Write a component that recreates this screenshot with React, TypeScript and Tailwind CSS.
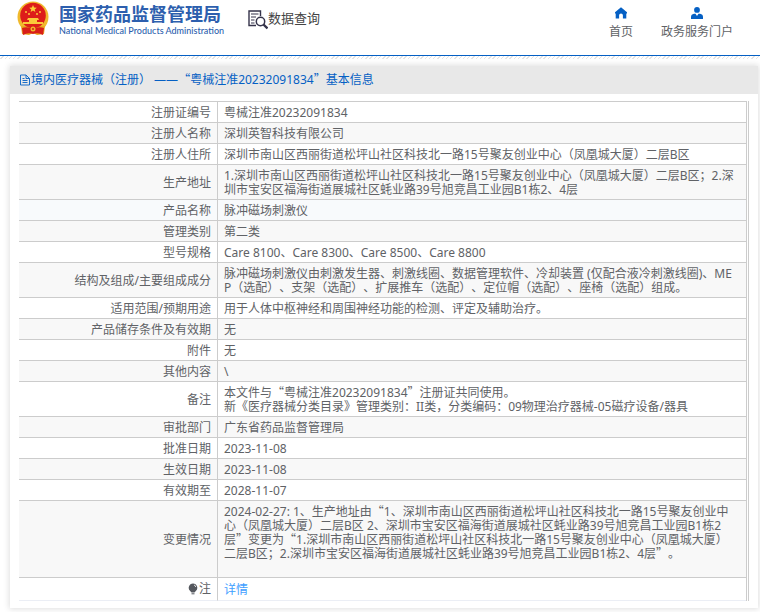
import type { ReactNode } from 'react';

// quotes come from the CJK font so they take a full-width cell
function Quoted({ children }: { children: ReactNode }) {
  return (
    <>
      <span className="font-['Noto_Sans_CJK_SC',sans-serif] leading-none">“</span>
      {children}
      <span className="font-['Noto_Sans_CJK_SC',sans-serif] leading-none">”</span>
    </>
  );
}

const rows: { label: string; value: ReactNode; active?: boolean }[] = [
  { label: '注册证编号', value: '粤械注准20232091834' },
  { label: '注册人名称', value: '深圳英智科技有限公司' },
  {
    label: '注册人住所',
    value: '深圳市南山区西丽街道松坪山社区科技北一路15号聚友创业中心（凤凰城大厦）二层B区',
  },
  {
    label: '生产地址',
    value:
      '1.深圳市南山区西丽街道松坪山社区科技北一路15号聚友创业中心（凤凰城大厦）二层B区；2.深圳市宝安区福海街道展城社区蚝业路39号旭竞昌工业园B1栋2、4层',
  },
  { label: '产品名称', value: '脉冲磁场刺激仪', active: true },
  { label: '管理类别', value: '第二类' },
  { label: '型号规格', value: 'Care 8100、Care 8300、Care 8500、Care 8800' },
  {
    label: '结构及组成/主要组成成分',
    value:
      '脉冲磁场刺激仪由刺激发生器、刺激线圈、数据管理软件、冷却装置 (仅配合液冷刺激线圈)、MEP（选配）、支架（选配）、扩展推车（选配）、定位帽（选配）、座椅（选配）组成。',
  },
  { label: '适用范围/预期用途', value: '用于人体中枢神经和周围神经功能的检测、评定及辅助治疗。' },
  { label: '产品储存条件及有效期', value: '无' },
  { label: '附件', value: '无' },
  { label: '其他内容', value: '\\' },
  {
    label: '备注',
    value: (
      <>
        本文件与<Quoted>粤械注准20232091834</Quoted>注册证共同使用。
        <br />
        新《医疗器械分类目录》管理类别：II类，分类编码：09物理治疗器械-05磁疗设备/器具
      </>
    ),
  },
  { label: '审批部门', value: '广东省药品监督管理局' },
  { label: '批准日期', value: '2023-11-08' },
  { label: '生效日期', value: '2023-11-08' },
  { label: '有效期至', value: '2028-11-07' },
  {
    label: '变更情况',
    value: (
      <>
        2024-02-27: 1、生产地址由
        <Quoted>
          1、深圳市南山区西丽街道松坪山社区科技北一路15号聚友创业中心（凤凰城大厦）二层B区
          2、深圳市宝安区福海街道展城社区蚝业路39号旭竞昌工业园B1栋2层
        </Quoted>
        变更为
        <Quoted>
          1.深圳市南山区西丽街道松坪山社区科技北一路15号聚友创业中心（凤凰城大厦）二层B区；2.深圳市宝安区福海街道展城社区蚝业路39号旭竞昌工业园B1栋2、4层
        </Quoted>
        。
        <br />
        <br />
      </>
    ),
  },
];

function Emblem() {
  return (
    <svg viewBox="0 0 32 34" className="h-[34px] w-8 shrink-0" aria-hidden="true">
      <circle cx="16" cy="16" r="15.5" fill="#f0b92d" />
      <path d="M4 25 L28 25 L27 33 L20 34 L16 32 L12 34 L5 33 Z" fill="#e9a820" />
      <circle cx="16" cy="14.5" r="12.8" fill="#dd1d1a" />
      <path d="M5 27 Q10 25 16 28 Q22 25 27 27 L26 34 Q21 31 16 33 Q11 31 6 34 Z" fill="#d81e18" />
      <path d="M16 4 l1.1 2.5 2.7.2-2.1 1.7.7 2.6-2.4-1.4-2.4 1.4.7-2.6-2.1-1.7 2.7-.2z" fill="#fbd03a" />
      <g fill="#fbc93a">
        <circle cx="9" cy="11" r="1" />
        <circle cx="12" cy="13" r="1" />
        <circle cx="20" cy="13" r="1" />
        <circle cx="23" cy="11" r="1" />
        <path d="M11 17h10l1 2H10zM12 19h8v2h-8zM6 21h20v2H6z" />
      </g>
      <circle cx="16" cy="28" r="2.5" fill="#f0b92d" />
      <circle cx="16" cy="28" r="1" fill="#d81e18" />
    </svg>
  );
}

function QueryIcon() {
  return (
    <svg viewBox="0 0 20 20" className="h-5 w-5 shrink-0" fill="none" stroke="#35334a" aria-hidden="true">
      <path d="M12.5 6V1H1v14.5h7" strokeWidth="1.4" />
      <path d="M3 4h7.5M3 7h5M3 10h3.5M3 13h3.5" strokeWidth="1.2" />
      <circle cx="12.5" cy="11.5" r="4.2" strokeWidth="1.5" />
      <path d="M15.5 14.5l4 4" strokeWidth="2.4" />
    </svg>
  );
}

function HomeIcon() {
  return (
    <svg viewBox="0 0 12 12" className="h-3 w-3" fill="#0560c4" aria-hidden="true">
      <path d="M6 .3 0 5.3v1.200h.7V11.500h3.400V8.300a1.900 1.900 0 0 1 3.800 0V11.500H11.300V6.500H12V5.300z" />
    </svg>
  );
}

function UserIcon() {
  return (
    <svg viewBox="0 0 12 12" className="h-3 w-3" fill="#0560c4" aria-hidden="true">
      <circle cx="6" cy="2.9" r="2.9" />
      <path d="M0 12V10Q0 7.2 3 6.7H4.5L6 9l1.5-2.3H9q3 .5 3 3.3v2z" />
    </svg>
  );
}

function DocIcon() {
  return (
    <svg viewBox="0 0 12 12" className="h-3 w-3 shrink-0" fill="none" stroke="#0560c4" aria-hidden="true">
      <path d="M1.5 1h5.500l3.500 3.500V11h-9zM7 1v3.500h3.500M3.500 4.500h2M3.500 6.500h5M3.500 8.500h5" strokeWidth=".9" />
    </svg>
  );
}

function BulbIcon() {
  return (
    <svg viewBox="0 0 10 12" className="h-3 w-2.5" aria-hidden="true">
      <path d="M5 .5a4.300 4.300 0 0 0-2.600 7.700L3.500 9.500h3l1.100-1.300A4.300 4.300 0 0 0 5 .5z" fill="#55585e" />
      <path d="M3.500 10.800h3" stroke="#55585e" />
      <path d="M6 2q1.500.4 1.700 2" stroke="#fff" strokeWidth=".8" fill="none" />
    </svg>
  );
}

export default function App() {
  return (
    <div className="bg-white pb-1 font-['Noto_Sans','Noto_Sans_CJK_SC',sans-serif] text-xs text-[#606266] [text-spacing-trim:space-all]">
      <header className="flex h-14 items-start justify-between border-b border-[#0560c4] pr-[27px] pl-[17px]">
        <div className="flex items-start">
          <a href="#" className="flex gap-[10px] pt-px">
            <Emblem />
            <span className="flex flex-col pt-[2px] whitespace-nowrap text-[#2d5fae]">
              <span className="text-[18px] leading-[22px] font-bold">国家药品监督管理局</span>
              <span className="font-[Lato,sans-serif] text-[9px] leading-3 font-medium">
                National Medical Products Administration
              </span>
            </span>
          </a>
          <h1 className="ml-6 flex items-start pt-2 text-[13px] leading-5 text-[#444]">
            <span className="pt-[2px]">
              <QueryIcon />
            </span>
            数据查询
          </h1>
        </div>
        <nav className="flex gap-7 pt-[7px] leading-4">
          <a href="#" className="flex flex-col items-center gap-[5px]">
            <HomeIcon />
            首页
          </a>
          <a href="#" className="flex flex-col items-center gap-[5px]">
            <UserIcon />
            政务服务门户
          </a>
        </nav>
      </header>
      <div className="h-[3px] bg-[repeating-linear-gradient(135deg,#fff_0_2px,#e4e4e4_2px_3px)]" />

      <main className="mt-[7px] mr-[2px] ml-[10px] bg-white pb-[7px] shadow-[0_0_6px_1px_rgba(0,0,0,0.13)]">
        <h2 className="flex h-7 items-center bg-[#e8e8e8] pl-[9px] text-[#0560c4]">
          <DocIcon />
          <span>
            境内医疗器械（注册） ——<Quoted>粤械注准20232091834</Quoted>基本信息
          </span>
        </h2>
        <div className="mt-[7px] mr-[9px] ml-[9px] border-r border-[#ccc] pr-px">
          <table className="w-full table-fixed border-separate border-spacing-0 border-t border-r border-[#ccc] leading-[14px]">
            <colgroup>
              <col className="w-[199px]" />
              <col />
            </colgroup>
            <tbody>
              {rows.map((r) => (
                <tr key={r.label} className={r.active ? 'bg-[#f8fafc]' : 'even:bg-[#f8f8f8]'}>
                  <th
                    scope="row"
                    className="border-r border-b border-[#ccc] pt-1 pr-[6px] pb-[2px] text-right align-middle font-normal"
                  >
                    {r.label}
                  </th>
                  <td className="border-b border-[#ccc] pt-1 pr-[10px] pb-[2px] pl-[6px] break-all">{r.value}</td>
                </tr>
              ))}
              <tr>
                <th
                  scope="row"
                  className="border-r border-b border-r-[#ccc] border-b-[#ebeef5] pt-1 pr-[6px] pb-[2px] text-right font-normal"
                >
                  <span className="inline-flex items-center gap-px">
                    <BulbIcon />注
                  </span>
                </th>
                <td className="border-b border-[#ebeef5] pt-1 pb-[2px] pl-[6px] leading-4">
                  <a href="#" className="text-[#409eff]">
                    详情
                  </a>
                </td>
              </tr>
            </tbody>
          </table>
        </div>
      </main>
    </div>
  );
}
